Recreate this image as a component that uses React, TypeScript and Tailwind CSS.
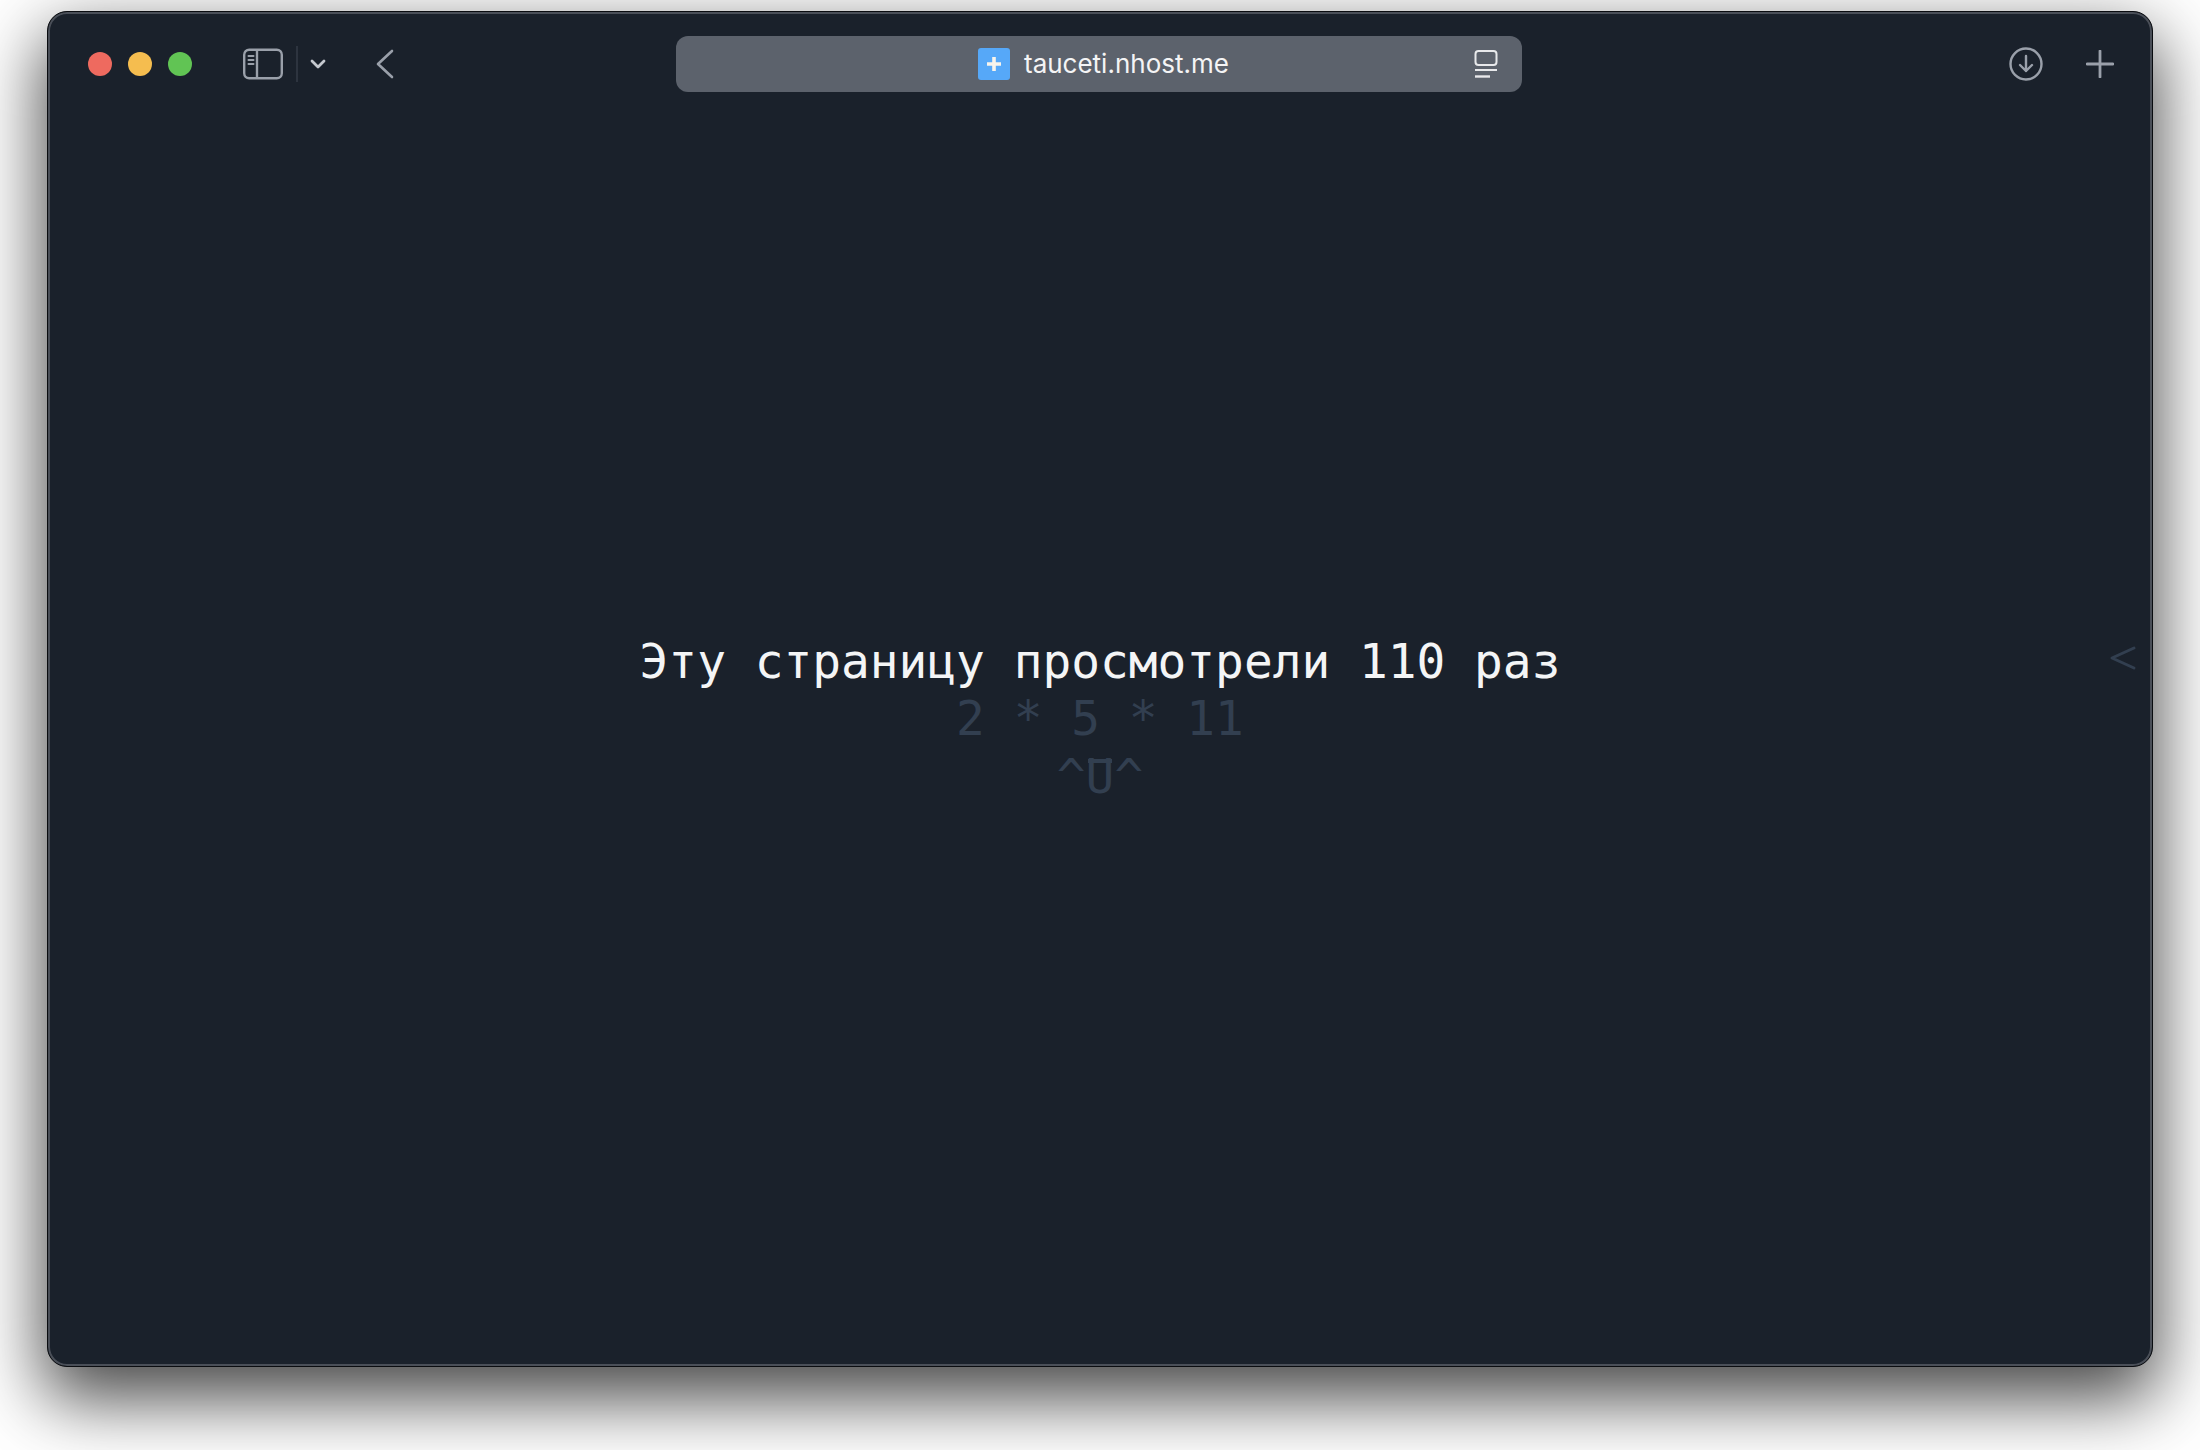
export default function App() {
  return (
    <div className="h-[1450px] w-[2200px] overflow-hidden bg-white pl-[47px] pt-[11px]">
      <div className="relative flex h-[1356px] w-[2106px] flex-col rounded-[20px] border border-[#0a0c10] bg-[#1a212b] shadow-[0_28px_70px_4px_rgba(0,0,0,0.72),inset_0_0_0_2px_#4a4f58]">
        <div className="flex h-[104px] items-center">
          <div className="ml-[40px] flex gap-[16px]">
            <div className="h-[24px] w-[24px] rounded-full bg-[#ee6a5f]" />
            <div className="h-[24px] w-[24px] rounded-full bg-[#f5bd4f]" />
            <div className="h-[24px] w-[24px] rounded-full bg-[#61c454]" />
          </div>
          <svg className="ml-[51px]" width="40" height="32" viewBox="0 0 40 32" fill="none" stroke="#9aa0aa" strokeWidth="2.4">
            <rect x="1.2" y="1.7" width="37.6" height="28.6" rx="5" />
            <path d="M14 2v28" />
            <path d="M5.5 8h5M5.5 12h5M5.5 16h5" strokeLinecap="round" strokeWidth="2" />
          </svg>
          <div className="ml-[13px] h-[36px] w-[2px] bg-[#2d343f]" />
          <svg className="ml-[12px]" width="16" height="10" viewBox="0 0 16 10" fill="none" stroke="#c5c9cf" strokeWidth="2.8" strokeLinecap="round" strokeLinejoin="round">
            <path d="M2 2l6 6 6-6" />
          </svg>
          <svg className="ml-[50px]" width="18" height="30" viewBox="0 0 18 30" fill="none" stroke="#9aa0aa" strokeWidth="2.6" strokeLinecap="round" strokeLinejoin="round">
            <path d="M16 2L2 15l14 13" />
          </svg>
          <div className="ml-[282px] flex h-[56px] w-[846px] items-center rounded-[12px] bg-[#5c626c]">
            <div className="ml-[302px] flex h-[32px] w-[32px] items-center justify-center rounded-[3px] bg-[#56a8f8]">
              <svg width="16" height="16" viewBox="0 0 16 16" fill="#f8f4ec">
                <path d="M6.2 1h3.6v5.2H15v3.6H9.8V15H6.2V9.8H1V6.2h5.2z" />
              </svg>
            </div>
            <span className="ml-[14px] w-[206px] font-['Inter',sans-serif] text-[26px] leading-none whitespace-nowrap text-[#f4f4f5]">tauceti.nhost.me</span>
            <svg className="ml-[244px]" width="24" height="28" viewBox="0 0 24 28" fill="none" stroke="#e8e9eb" strokeWidth="2">
              <rect x="1.5" y="1" width="21" height="14" rx="3" />
              <path d="M1 20h22" />
              <path d="M1 26.500h15" strokeWidth="2.400" />
            </svg>
          </div>
          <svg className="ml-[486px]" width="36" height="36" viewBox="0 0 36 36" fill="none" stroke="#9aa0aa" strokeWidth="2.4" strokeLinecap="round" strokeLinejoin="round">
            <circle cx="18" cy="18" r="15.500" />
            <path d="M18 10v15M12 19l6 6 6-6" />
          </svg>
          <svg className="ml-[42px]" width="28" height="28" viewBox="0 0 28 28" fill="none" stroke="#9aa0aa" strokeWidth="2.800" strokeLinecap="round">
            <path d="M14 1v26M1 14h26" />
          </svg>
        </div>
        <div className="flex flex-1 flex-col items-center justify-center pb-[44px] text-center font-['DejaVu_Sans_Mono',monospace] text-[47.800px] leading-[57.600px]">
          <div className="text-[#f4f5f6]">Эту страницу просмотрели 110 раз</div>
          <div className="text-[#323f50]">2 * 5 * 11</div>
          <div className="text-[#323f50]">
            ^<span className="relative inline-block">U<span className="absolute left-[2px] right-[2px] top-[11px] h-[4px] bg-[#323f50]" /></span>^
          </div>
        </div>
        <svg className="absolute right-[16px] top-[633px]" width="26" height="26" viewBox="0 0 26 26" fill="none" stroke="#323f50" strokeWidth="3" strokeLinecap="round" strokeLinejoin="round">
          <path d="M24 3L2 13l22 10" />
        </svg>
      </div>
    </div>
  );
}
